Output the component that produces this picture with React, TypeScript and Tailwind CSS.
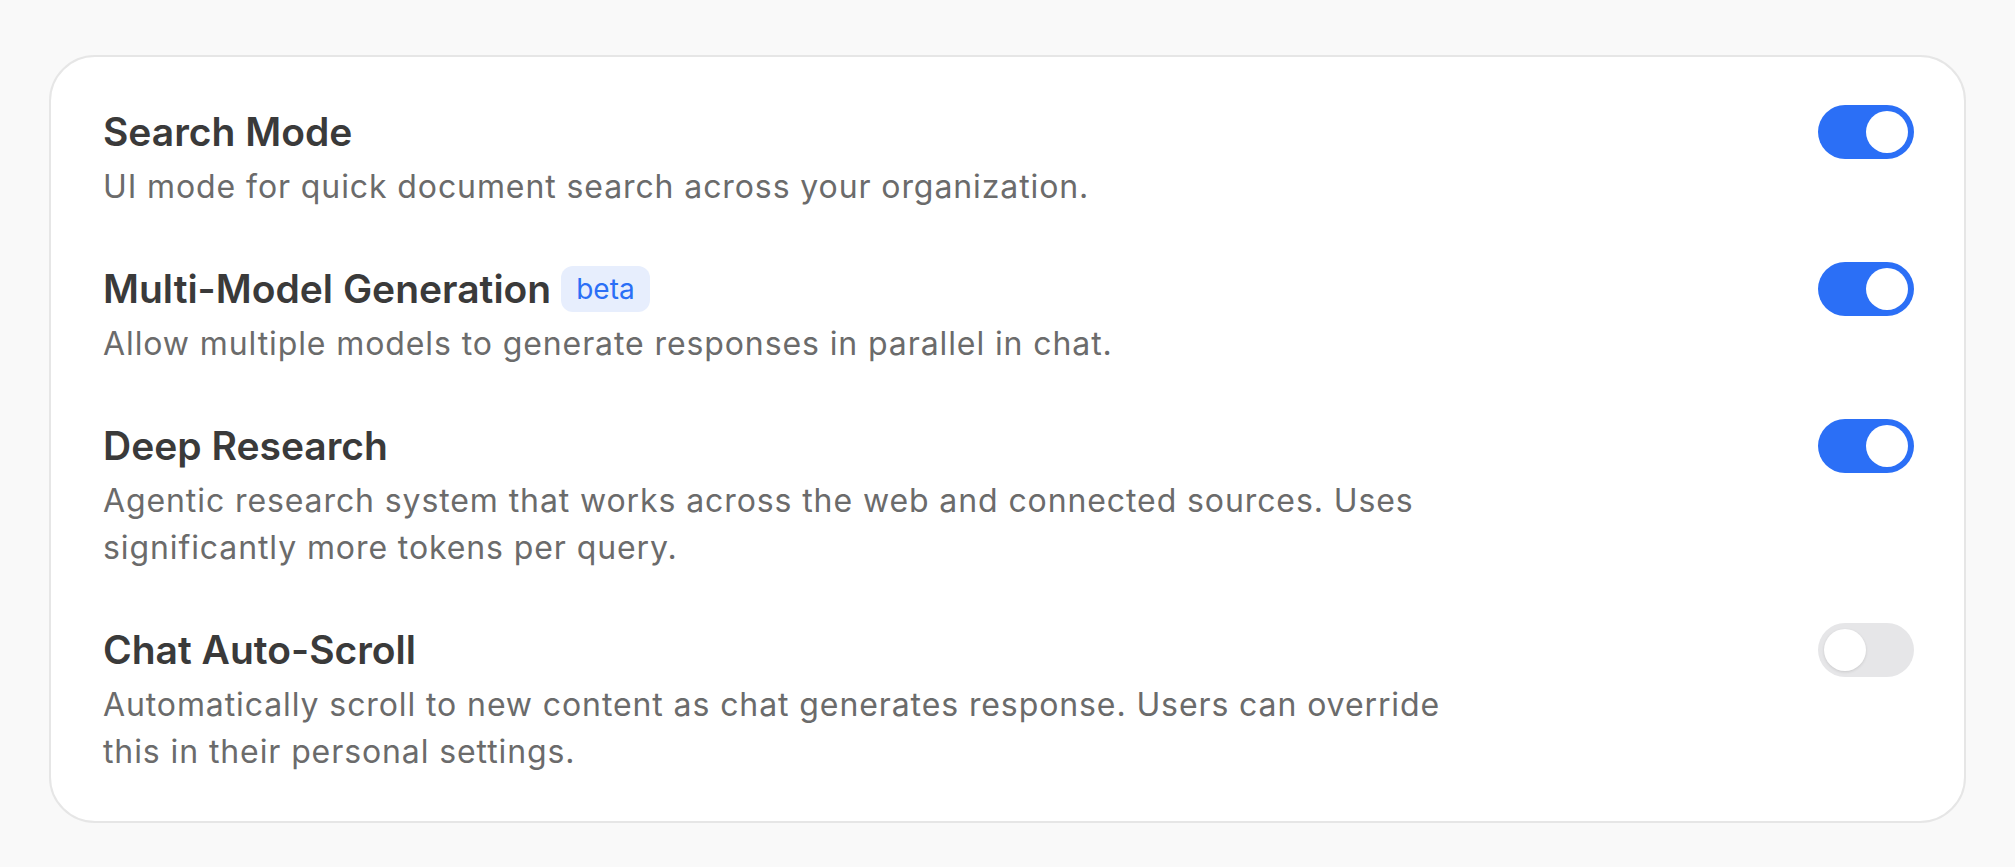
import { useState } from 'react'

type Setting = {
  id: string
  title: string
  description: string
  beta?: boolean
  enabled: boolean
}

const initialSettings: Setting[] = [
  {
    id: 'search',
    title: 'Search Mode',
    description: 'UI mode for quick document search across your organization.',
    enabled: true,
  },
  {
    id: 'multi-model',
    title: 'Multi-Model Generation',
    description: 'Allow multiple models to generate responses in parallel in chat.',
    beta: true,
    enabled: true,
  },
  {
    id: 'deep-research',
    title: 'Deep Research',
    description:
      'Agentic research system that works across the web and connected sources. Uses significantly more tokens per query.',
    enabled: true,
  },
  {
    id: 'auto-scroll',
    title: 'Chat Auto-Scroll',
    description:
      'Automatically scroll to new content as chat generates response. Users can override this in their personal settings.',
    enabled: false,
  },
]

function Toggle({ on, onChange }: { on: boolean; onChange: () => void }) {
  return (
    <button
      type="button"
      role="switch"
      aria-checked={on}
      onClick={onChange}
      className={
        on
          ? 'flex h-[54px] w-[96px] shrink-0 items-center justify-end rounded-full bg-[#2b6ff6] p-[6px]'
          : 'flex h-[54px] w-[96px] shrink-0 items-center justify-start rounded-full bg-[#e6e6e8] p-[6px]'
      }
    >
      <span
        className={
          on
            ? 'block h-[42px] w-[42px] rounded-full bg-white'
            : 'block h-[42px] w-[42px] rounded-full bg-white shadow-[0_1px_3px_rgba(0,0,0,0.12)]'
        }
      />
    </button>
  )
}

export default function App() {
  const [settings, setSettings] = useState(initialSettings)

  const toggle = (id: string) =>
    setSettings(prev => prev.map(s => (s.id === id ? { ...s, enabled: !s.enabled } : s)))

  return (
    <div className="min-h-[867px] bg-[#f9f9f9] px-[49px] pt-[55px] font-['Inter',sans-serif]">
      <div className="flex flex-col gap-[55px] rounded-[46px] border-2 border-[#e6e6e6] bg-white pb-[46px] pl-[52px] pr-[50px] pt-[51px]">
        {settings.map(s => (
          <div key={s.id} className="flex items-start justify-between">
            <div className="max-w-[1370px]">
              <div className="flex items-center gap-[10px]">
                <h3 className="text-[39px] font-semibold leading-[48px] text-[#3a3a3a]">{s.title}</h3>
                {s.beta && (
                  <span className="rounded-[12px] bg-[#e7eefd] px-[15px] text-[28px] leading-[46px] text-[#2b6ff6]">
                    beta
                  </span>
                )}
              </div>
              <p className="mt-[7px] text-[32px] leading-[47px] tracking-[0.9px] text-[#6b6b6b]">{s.description}</p>
            </div>
            <div className="-mt-[3px]">
              <Toggle on={s.enabled} onChange={() => toggle(s.id)} />
            </div>
          </div>
        ))}
      </div>
    </div>
  )
}
